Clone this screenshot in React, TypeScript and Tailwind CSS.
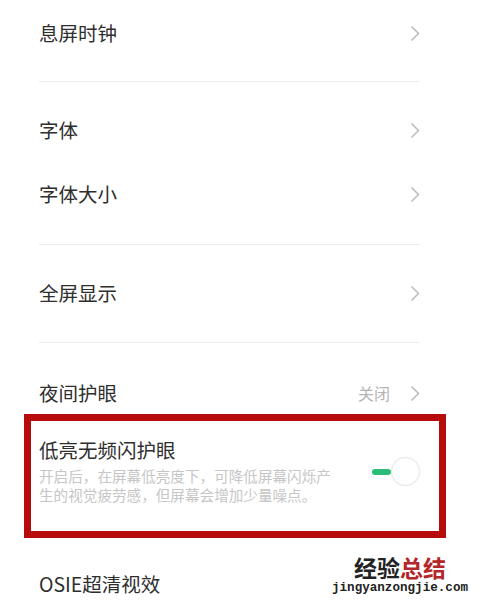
import React from "react";

const font = { fontFamily: '"Noto Sans CJK SC", "Noto Sans", sans-serif' };

function Chevron() {
  return (
    <svg width="10" height="17" viewBox="0 0 10 17" className="shrink-0">
      <polyline points="1.5,1.5 8.5,8.5 1.5,15.5" fill="none" stroke="#bdbdbd" strokeWidth="1.6" />
    </svg>
  );
}

function Row({ label, value, h = "h-[64px]" }: { label: string; value?: string; h?: string }) {
  return (
    <div className={`flex items-center justify-between ${h}`}>
      <span className="text-[19.5px] text-[#2e2e2e]">{label}</span>
      <span className="flex items-center gap-[20px]">
        {value && <span className="text-[16px] text-[#b4b4b4]">{value}</span>}
        <Chevron />
      </span>
    </div>
  );
}

function Divider() {
  return <div className="h-px bg-[#ececec]" />;
}

export default function App() {
  return (
    <div className="relative w-[481px] h-[605px] overflow-hidden bg-white" style={font}>
      <div className="pl-[39px] pr-[61px]">
        <Row label="息屏时钟" h="h-[66px]" />
        <div className="h-[15px]" />
        <Divider />
        <div className="h-[16px]" />
        <Row label="字体" />
        <Row label="字体大小" />
        <div className="h-[18px]" />
        <Divider />
        <div className="h-[16px]" />
        <Row label="全屏显示" />
        <div className="h-[17px]" />
        <Divider />
        <div className="h-[30px]" />
        <Row label="夜间护眼" value="关闭" h="h-[40px]" />
      </div>

      {/* highlighted setting */}
      <div className="ml-[24px] mt-px w-[422px] h-[124px] border-[7px] border-[#b80c0c]">
        <div className="flex items-start justify-between pl-[8px] pr-[19px] pt-[16px]">
          <div>
            <div className="text-[19.5px] leading-[26px] text-[#2e2e2e]">低亮无频闪护眼</div>
            <div className="mt-[3px] text-[14.6px] leading-[19px] text-[#c6c6c6]">
              开启后，在屏幕低亮度下，可降低屏幕闪烁产
              <br />
              生的视觉疲劳感，但屏幕会增加少量噪点。
            </div>
          </div>
          <div className="flex items-center mt-[20px]">
            <div className="w-[19px] h-[6px] rounded-full bg-[#2bbd77]" />
            <div className="w-[29px] h-[29px] rounded-full bg-white border border-[#e6e6e6] shadow-[0_0_2px_rgba(0,0,0,0.06)]" />
          </div>
        </div>
      </div>

      <div className="pl-[39px] mt-[14px] h-[64px] flex items-center">
        <span className="text-[19.5px] text-[#2e2e2e]">OSIE超清视效</span>
      </div>

      {/* watermark */}
      <div className="absolute left-[330px] top-[553px] w-[140px] flex flex-col items-center">
        <div className="text-[23px] leading-[28px] font-bold tracking-[0px]">
          <span className="text-[#222]">经验</span>
          <span className="text-[#b3262a]">总结</span>
        </div>
        <div
          className="text-[12.6px] leading-[14px] text-[#222] font-bold"
          style={{ fontFamily: '"Liberation Mono", monospace' }}
        >
          jingyanzongjie.com
        </div>
      </div>
    </div>
  );
}
